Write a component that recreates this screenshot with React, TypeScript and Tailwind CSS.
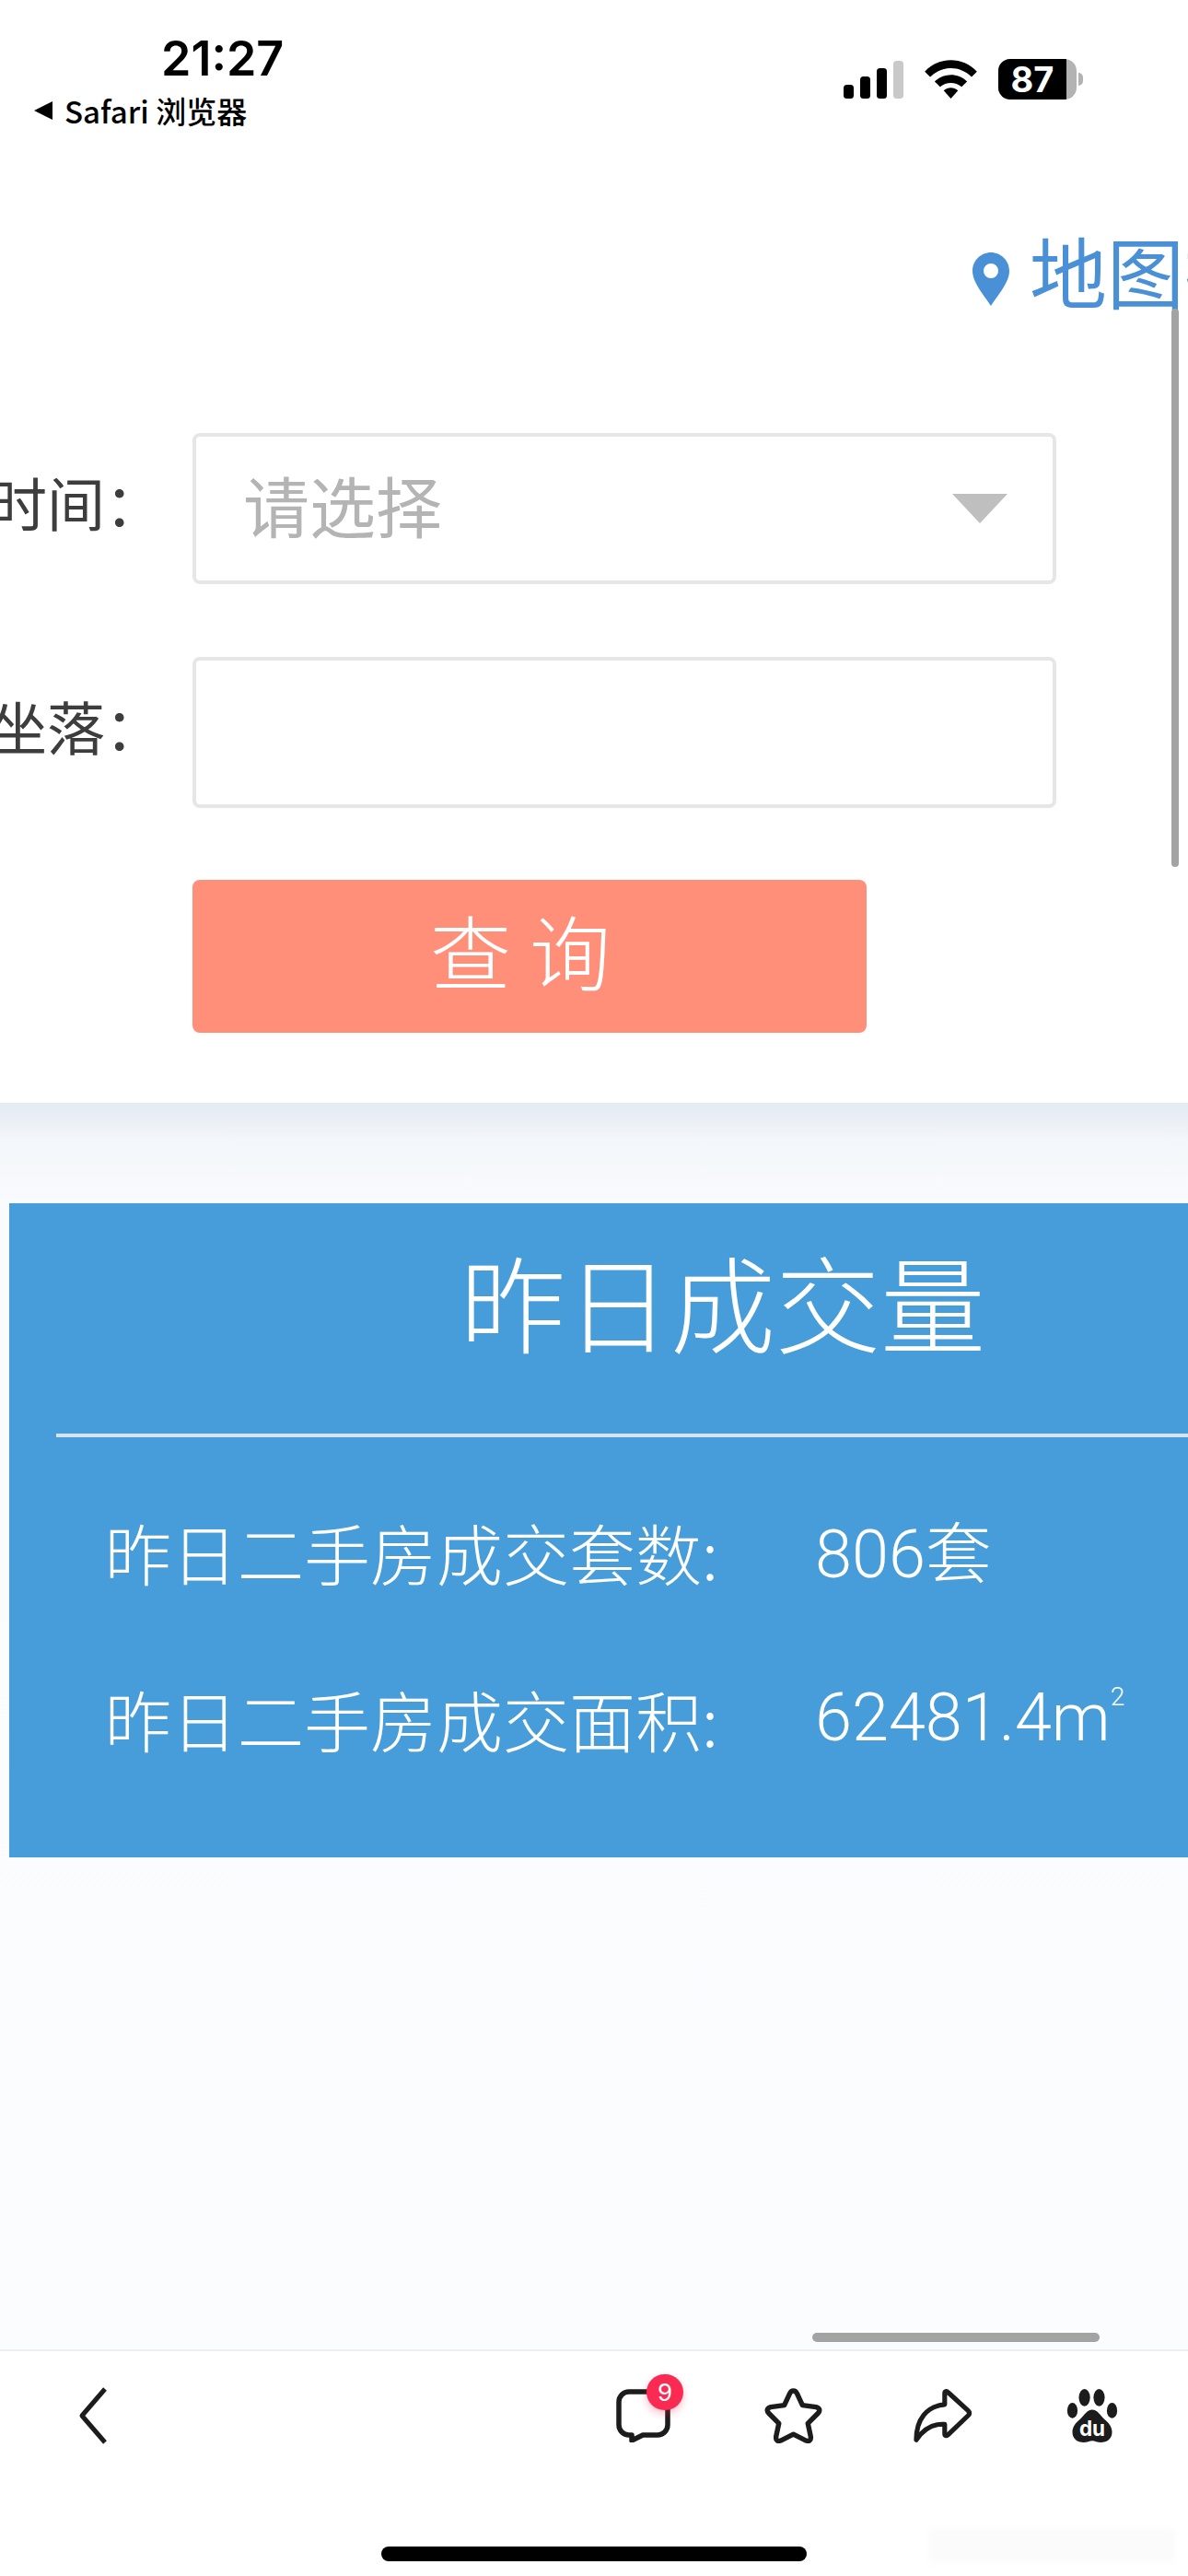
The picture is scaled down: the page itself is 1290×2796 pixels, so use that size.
import React from "react";

const CJK = "font-['Noto_Sans_CJK_SC','Noto_Sans',sans-serif]";

const StatusBar = () => (
  <div className="flex h-[176px] shrink-0 justify-between bg-white">
    <div className="ml-[36px] pt-[36px]">
      <div className="ml-[139px] font-['Inter',sans-serif] text-[52px] leading-[56px] font-semibold text-black">21:27</div>
      <div className="mt-[10px] flex items-center gap-[12px]">
        <svg width="22" height="20" viewBox="0 0 22 20"><path d="M21 0v20L1 10z" fill="#000" /></svg>
        <span className={`${CJK} text-[33px] leading-[36px] font-medium text-black`}>Safari 浏览器</span>
      </div>
    </div>
    <div className="mr-[114px] mt-[64px] flex items-start gap-[23px]">
      <svg className="mt-[2px]" width="65" height="42" viewBox="0 0 65 42">
        <rect x="0" y="26" width="11" height="15" rx="3.5" fill="#000" />
        <rect x="18" y="17" width="11" height="24" rx="3.5" fill="#000" />
        <rect x="36" y="8" width="11" height="33" rx="3.5" fill="#000" />
        <rect x="54" y="0" width="11" height="41" rx="3.5" fill="#c9c9c9" />
      </svg>
      <svg className="mt-[1px]" width="57" height="43" viewBox="0 0 58 44">
        <path d="M0 13C16-4 42-4 58 13l-6 6C39 6 19 6 6 19z" fill="#000" />
        <path d="M11 24c10-10 26-10 36 0l-6 6c-7-6-17-6-24 0z" fill="#000" />
        <path d="M21 34c5-4 11-4 16 0L29 43z" fill="#000" />
      </svg>
      <div className="flex items-center">
        <div className="relative flex h-[44px] w-[85px] items-center overflow-hidden rounded-[13px] bg-[#b3b3b3]">
          <div className="flex h-full w-[74px] items-center justify-center bg-black font-['Inter',sans-serif] text-[38px] font-bold text-white">87</div>
        </div>
        <div className="ml-[2px] h-[14px] w-[5px] rounded-r-full bg-[#b3b3b3]" />
      </div>
    </div>
  </div>
);

const FormRow = ({ label, children }: { label: string; children: React.ReactNode }) => (
  <div className="flex h-[164px] items-center">
    <div className={`${CJK} flex w-[209px] justify-end overflow-hidden pr-[32px] pb-[16px] text-[63px] whitespace-nowrap text-[#3d3d3d]`}>
      <span className="shrink-0">{label}</span>
    </div>
    <div className="flex h-full w-[938px] items-center justify-between rounded-[8px] border-[4px] border-[#e6e6e6] bg-white pl-[51px] pr-[46px]">
      {children}
    </div>
  </div>
);

const BottomBar = () => (
  <div className="flex h-[246px] shrink-0 flex-col border-t-[2px] border-[#eeeeee] bg-white">
    <div className="mt-[39px] flex items-start pl-[85px]">
      <svg width="32" height="62" viewBox="0 0 32 62" fill="none" stroke="#1c1c1c" strokeWidth="5" strokeLinejoin="round">
        <path d="M29 2 4 31l25 29" />
      </svg>
      <div className="relative ml-[552px] mt-[2px] h-[58px] w-[59px]">
        <svg width="59" height="58" viewBox="0 0 59 58" fill="none" stroke="#1c1c1c" strokeWidth="5.5" strokeLinejoin="round">
          <path d="M14 3h31a11 11 0 0 1 11 11v25a11 11 0 0 1-11 11H29l-12 6v-6h-3A11 11 0 0 1 3 39V14A11 11 0 0 1 14 3z" />
        </svg>
        <div className="absolute -top-[16px] left-[33px] flex h-[39px] w-[40px] items-center justify-center rounded-full bg-[#fb2a52] font-['Inter',sans-serif] text-[26px] text-white shadow-[0_4px_8px_rgba(251,42,82,0.3)]">9</div>
      </div>
      <svg className="ml-[102px]" width="63" height="61" viewBox="0 0 64 62" fill="none" stroke="#1c1c1c" strokeWidth="5.5" strokeLinejoin="round">
        <path d="M32 4c2 0 3 1 4 3l6 13 15 2c4 1 5 4 2 7L48 40l3 14c1 5-2 6-5 5l-14-7-14 7c-3 1-6 0-5-5l3-14L5 29c-3-3-2-6 2-7l15-2 6-13c1-2 2-3 4-3z" />
      </svg>
      <svg className="ml-[97px] mt-[2px]" width="66" height="58" viewBox="0 0 68 62" fill="none" stroke="#1c1c1c" strokeWidth="5.5" strokeLinejoin="round">
        <path d="M37 5c0-2 2-3 4-1l23 21c2 2 2 4 0 6L41 53c-2 2-4 1-4-1V41c-13-1-24 5-33 18 0-24 12-39 33-41z" />
      </svg>
      <svg className="ml-[102px] mt-[2px]" width="56" height="58" viewBox="0 0 58 62">
        <ellipse cx="20" cy="10" rx="6.5" ry="10" fill="#1c1c1c" />
        <ellipse cx="37" cy="10" rx="6.5" ry="10" fill="#1c1c1c" />
        <ellipse cx="6" cy="25" rx="6" ry="9" fill="#1c1c1c" />
        <ellipse cx="52" cy="25" rx="6" ry="9" fill="#1c1c1c" />
        <path d="M29 24c6 0 9 6 14 11 5 4 9 9 9 15 0 8-6 12-13 12-4 0-7-2-10-2s-6 2-10 2C12 62 6 58 6 50c0-6 4-11 9-15 5-5 8-11 14-11z" fill="#1c1c1c" />
        <text x="29" y="55" textAnchor="middle" fontFamily="Inter, sans-serif" fontWeight="700" fontSize="24" fill="#fff">du</text>
      </svg>
    </div>
    <div className="mx-auto mt-auto mb-[16px] h-[16px] w-[462px] rounded-full bg-black" />
  </div>
);

export default function App() {
  return (
    <div className={`${CJK} relative flex h-[2796px] w-[1290px] flex-col overflow-hidden bg-white`}>
      <StatusBar />

      <div className="flex h-[1021px] shrink-0 flex-col bg-white">
        <div className="flex h-[244px] items-center pl-[1056px]">
          <svg className="mt-[10px] shrink-0" width="40" height="58" viewBox="0 0 40 58">
            <path fillRule="evenodd" d="M20 0c11 0 20 9 20 20 0 13-13 27-20 38C13 47 0 33 0 20 0 9 9 0 20 0zm0 12a8 8 0 1 0 0 16 8 8 0 0 0 0-16z" fill="#4a90d6" />
          </svg>
          <span className="ml-[22px] pb-[10px] text-[84px] leading-none whitespace-nowrap text-[#4a90d6]">地图找房</span>
        </div>
        <div className="mt-[50px] flex flex-col gap-[79px]">
          <FormRow label="成交时间：">
            <span className="pb-[10px] text-[72px] text-[#b4b4b4]">请选择</span>
            <div className="mr-[3px] h-0 w-0 border-x-[30px] border-t-[32px] border-x-transparent border-t-[#bfbfbf]" />
          </FormRow>
          <FormRow label="房屋坐落：">
            <span />
          </FormRow>
        </div>
        <button className="ml-[209px] mt-[78px] h-[166px] w-[732px] rounded-[8px] bg-[#ff8f78] pb-[16px] text-[88px] font-light tracking-[20px] text-white">查询</button>
      </div>

      <div className="flex min-h-0 flex-1 flex-col bg-[linear-gradient(#e3eaf1_0,#f3f6fa_40px,#f9fbfe_110px,#fbfcfe_100%)]">
        <div className="ml-[10px] mt-[109px] h-[710px] w-[1300px] shrink-0 bg-[#469dd9] text-white">
          <div className="h-[250px] pl-[490px] pt-[30px] text-[114px] leading-[150px] font-light">昨日成交量</div>
          <div className="ml-[51px] h-[4px] bg-[#d6e4ee]" />
          <div className="pl-[104px]">
            <div className="mt-[61px] flex h-[126px] items-center text-[72px] font-light">
              <span className="w-[771px]">昨日二手房成交套数:</span>
              <span><span className="font-['Roboto',sans-serif]">806</span>套</span>
            </div>
            <div className="mt-[55px] flex h-[126px] items-center text-[72px] font-light">
              <span className="w-[771px]">昨日二手房成交面积:</span>
              <span className="font-['Roboto',sans-serif]">62481.4m<sup className="-top-[38px] text-[28px]">2</sup></span>
            </div>
          </div>
        </div>
      </div>

      <BottomBar />

      {/* 页面滚动条 */}
      <div className="absolute left-[1272px] top-[335px] h-[606px] w-[8px] rounded-full bg-[#a3a3a3]" />
      <div className="absolute left-[882px] top-[2532px] h-[10px] w-[312px] rounded-full bg-[#a3a3a3]" />
      {/* 右下角模糊水印 */}
      <div className="absolute left-[1008px] top-[2745px] h-[36px] w-[268px] bg-[#fbfbfb] blur-[3px]" />
    </div>
  );
}
